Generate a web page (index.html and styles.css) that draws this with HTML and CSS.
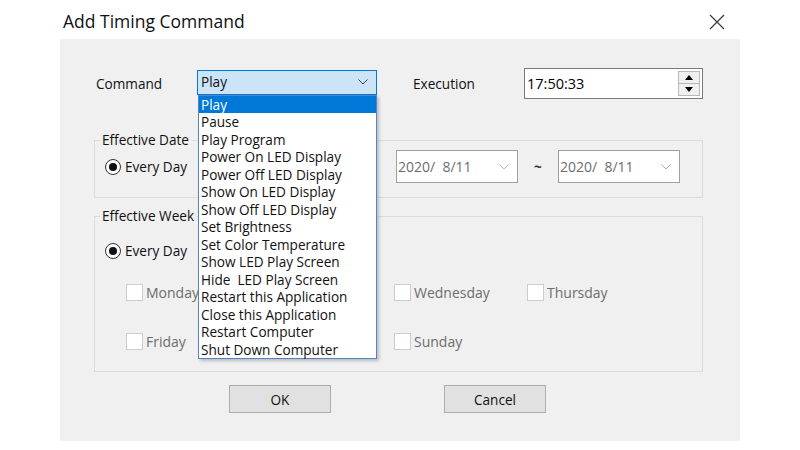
FILE: index.html
```html
<!DOCTYPE html>
<html lang="en">
<head>
<meta charset="utf-8">
<title>Add Timing Command</title>
<link rel="stylesheet" href="styles.css">
</head>
<body>
<div class="window">
  <header class="titlebar">
    <h1 class="title">Add Timing Command</h1>
    <button class="close" aria-label="Close">
      <svg width="16" height="16" viewBox="0 0 16 16"><path d="M1 1 L15 15 M15 1 L1 15" stroke="#3a3a3a" stroke-width="1.2" fill="none"/></svg>
    </button>
  </header>
  <main class="panel">
    <div class="row-command">
      <span class="lbl lbl-command">Command</span>
      <div class="combo">
        <span class="combo-value">Play</span>
        <svg class="chev" width="10" height="6" viewBox="0 0 10 6"><path d="M0.5 0.5 L5 5 L9.5 0.5" stroke="#404040" stroke-width="1" fill="none"/></svg>
        <ul class="dropdown">
          <li class="sel">Play</li>
          <li>Pause</li>
          <li>Play Program</li>
          <li>Power On LED Display</li>
          <li>Power Off LED Display</li>
          <li>Show On LED Display</li>
          <li>Show Off LED Display</li>
          <li>Set Brightness</li>
          <li>Set Color Temperature</li>
          <li>Show LED Play Screen</li>
          <li>Hide&nbsp; LED Play Screen</li>
          <li>Restart this Application</li>
          <li>Close this Application</li>
          <li>Restart Computer</li>
          <li>Shut Down Computer</li>
        </ul>
      </div>
      <span class="lbl lbl-exec">Execution</span>
      <div class="time">
        <span class="time-value">17:50:33</span>
        <div class="spin">
          <span class="spin-btn"><svg width="8" height="5" viewBox="0 0 8 5"><path d="M0 5 L4 0 L8 5 Z" fill="#000"/></svg></span>
          <span class="spin-btn"><svg width="8" height="5" viewBox="0 0 8 5"><path d="M0 0 L4 5 L8 0 Z" fill="#000"/></svg></span>
        </div>
      </div>
    </div>

    <fieldset class="group group-date">
      <legend>Effective Date</legend>
      <div class="date-row">
        <label class="radio-opt"><span class="radio"><span class="dot"></span></span>Every Day</label>
        <div class="date-box"><span>2020/&nbsp; 8/11</span><svg class="chev" width="10" height="6" viewBox="0 0 10 6"><path d="M0.5 0.5 L5 5 L9.5 0.5" stroke="#b5b5b5" stroke-width="1" fill="none"/></svg></div>
        <span class="tilde">~</span>
        <div class="date-box"><span>2020/&nbsp; 8/11</span><svg class="chev" width="10" height="6" viewBox="0 0 10 6"><path d="M0.5 0.5 L5 5 L9.5 0.5" stroke="#b5b5b5" stroke-width="1" fill="none"/></svg></div>
      </div>
    </fieldset>

    <fieldset class="group group-week">
      <legend>Effective Week</legend>
      <label class="radio-opt radio-week"><span class="radio"><span class="dot"></span></span>Every Day</label>
      <div class="days">
        <label class="day"><span class="check"></span>Monday</label>
        <span class="day day-hidden"></span>
        <label class="day"><span class="check"></span>Wednesday</label>
        <label class="day"><span class="check"></span>Thursday</label>
        <label class="day"><span class="check"></span>Friday</label>
        <span class="day day-hidden"></span>
        <label class="day"><span class="check"></span>Sunday</label>
      </div>
    </fieldset>

    <div class="buttons">
      <button class="btn btn-ok">OK</button>
      <button class="btn btn-cancel">Cancel</button>
    </div>
  </main>
</div>
</body>
</html>
```
FILE: styles.css
```css
* { box-sizing: border-box; }
html, body { margin: 0; padding: 0; background: #ffffff; }
body {
  font-family: "Open Sans", "Noto Sans", sans-serif;
  font-size: 13.6px;
  color: #111;
}
.window { width: 800px; height: 450px; }

.titlebar {
  height: 39px;
  display: flex;
  align-items: flex-start;
  justify-content: space-between;
}
.title {
  margin: 9px 0 0 63px;
  font-size: 17.5px;
  font-weight: 400;
  line-height: 24px;
  color: #111;
}
.close {
  margin: 14px 75px 0 0;
  width: 16px; height: 16px;
  padding: 0; border: 0; background: none;
  display: flex;
}

.panel {
  margin-left: 60px;
  width: 680px;
  height: 402px;
  background: #f0f0f0;
  padding: 0 37px 0 34px;
  display: flex;
  flex-direction: column;
}

.row-command {
  margin-top: 29px;
  height: 31px;
  display: flex;
  align-items: center;
}
.lbl { line-height: 18px; }
.lbl-command { margin-left: 2px; width: 101px; }
.lbl-exec { margin-left: 36px; width: 111px; }

.combo {
  position: relative;
  width: 180px;
  height: 25px;
  margin-top: -3px;
  background: #cce4f7;
  border: 1px solid #0078d7;
  display: flex;
  align-items: center;
  justify-content: space-between;
  padding: 0 8px 0 3px;
}
.combo-value { line-height: 18px; }

.dropdown {
  position: absolute;
  top: 24px;
  left: 0;
  width: 179px;
  margin: 0;
  padding: 0;
  list-style: none;
  background: #fff;
  border: 1px solid #4f86c6;
  box-shadow: 2px 2px 3px rgba(0,0,0,0.22);
  z-index: 10;
}
.dropdown li {
  height: 17.5px;
  line-height: 17.5px;
  padding-left: 2px;
  white-space: nowrap;
  color: #111;
}
.dropdown li.sel { background: #0078d7; color: #fff; }

.time {
  width: 179px;
  height: 31px;
  background: #fff;
  border: 1px solid #7a7a7a;
  display: flex;
  align-items: center;
  justify-content: space-between;
  padding: 0 2px 0 2px;
}
.time-value { font-size: 14.5px; line-height: 18px; color: #000; }
.spin {
  display: flex;
  flex-direction: column;
  width: 22px;
  height: 25px;
}
.spin-btn {
  flex: 1;
  display: flex;
  align-items: center;
  justify-content: center;
  background: #f0f0f0;
  border: 1px solid #b8b8b8;
}
.spin-btn + .spin-btn { border-top: 0; }

.group {
  margin: 0;
  padding: 0;
  border: 1px solid #dcdcdc;
  min-width: 0;
}
.group legend {
  margin-left: -5px;
  padding: 0 2px;
  line-height: 18px;
}
.group-date { margin-top: 32px; padding: 1px 22px 14px 10px; }
.group-week { margin-top: 9px; padding: 16px 10px 21px 10px; }

.date-row { display: flex; align-items: center; }
.radio-opt {
  display: flex;
  align-items: center;
  line-height: 20px;
}
.date-row .radio-opt { width: 291px; }
.radio {
  width: 16px; height: 16px;
  border: 1px solid #333;
  border-radius: 50%;
  background: #fff;
  display: flex;
  align-items: center;
  justify-content: center;
  margin-right: 4px;
}
.dot { width: 8px; height: 8px; border-radius: 50%; background: #111; }

.date-box {
  width: 122px;
  height: 33px;
  background: #fff;
  border: 1px solid #a0a0a0;
  display: flex;
  align-items: center;
  justify-content: space-between;
  padding: 0 8px 0 1px;
  color: #6d6d6d;
  font-size: 14px;
}
.tilde { width: 40px; text-align: center; font-weight: 700; color: #333; }

.radio-week { height: 20px; }
.days {
  margin: 22px 0 0 21px;
  display: grid;
  grid-template-columns: 134px 134px 133px 133px;
  grid-auto-rows: 18px;
  row-gap: 31px;
}
.day {
  display: flex;
  align-items: center;
  color: #6d6d6d;
  font-size: 14px;
}
.check {
  width: 17px; height: 17px;
  background: #fff;
  border: 1px solid #cccccc;
  margin-right: 3px;
}

.buttons { margin-top: 13px; display: flex; }
.btn {
  width: 102px;
  height: 28px;
  background: #e1e1e1;
  border: 1px solid #adadad;
  font-family: inherit;
  font-size: 13.6px;
  color: #111;
  padding: 0;
}
.btn-ok { margin-left: 135px; }
.btn-cancel { margin-left: 113px; }
```
